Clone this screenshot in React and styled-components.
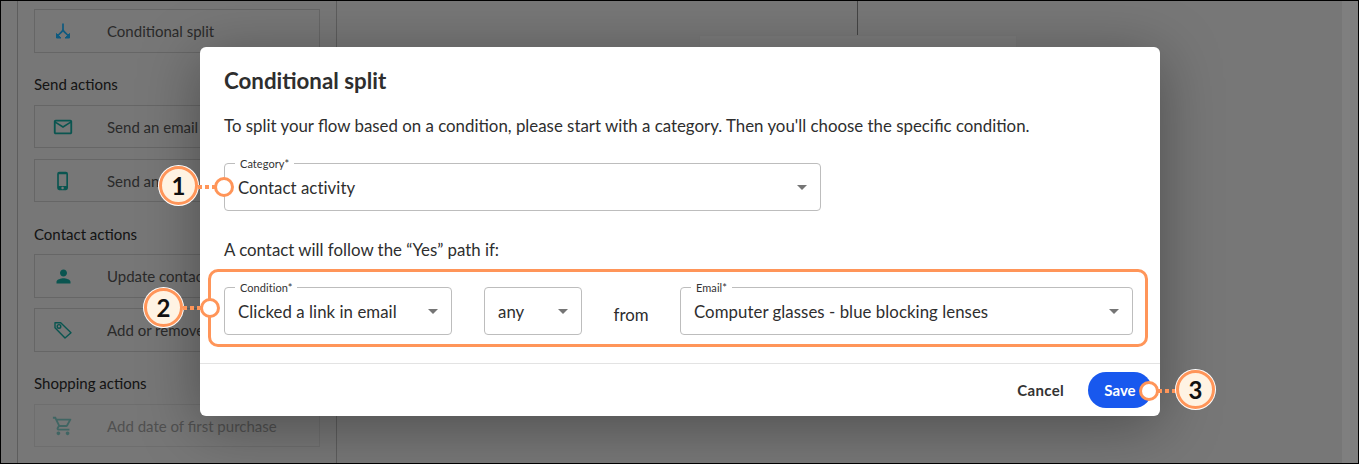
import React from "react";
import styled, { createGlobalStyle } from "styled-components";
import {
  MdOutlineMailOutline,
  MdOutlinePhoneIphone,
  MdPerson,
  MdOutlineShoppingCart,
} from "react-icons/md";

const Global = createGlobalStyle`
  * { box-sizing: border-box; }
  html, body { margin: 0; padding: 0; background: #fff; }
  body { font-family: "Lato", "Noto Sans", sans-serif; color: #2c2c2c; }
`;

const Frame = styled.div`
  position: relative;
  width: 1359px;
  height: 464px;
  overflow: hidden;
  display: flex;
  background: #eee;
  border: 1px solid #000;
`;

const Gutter = styled.div`
  width: 16px;
  flex: none;
`;

const Sidebar = styled.aside`
  width: 320px;
  flex: none;
  padding: 8.3px 16px 0;
  border-left: 1px solid #bbb;
  border-right: 1px solid #bbb;
`;

const ActionGroup = styled.section`
  display: flex;
  flex-direction: column;
  gap: 10.5px;
  margin-bottom: 21.5px;
`;

const GroupTitle = styled.h3`
  margin: 0;
  font-size: 15px;
  font-weight: 400;
  line-height: 20px;
  color: #2a2a2a;
`;

const ActionRow = styled.div`
  height: 43.5px;
  display: flex;
  align-items: center;
  border: 1px solid #ccc;
  font-size: 15px;
  color: #555;
  opacity: ${(p) => (p.$disabled ? 0.5 : 1)};
`;

const ActionIcon = styled.span`
  width: 56px;
  margin-right: 16px;
  flex: none;
  display: flex;
  justify-content: center;
  color: ${(p) => p.$color || "#14aaa0"};
  font-size: ${(p) => p.$size || 22}px;
  svg { display: block; }
`;

const Canvas = styled.main`
  flex: 1;
  display: flex;
  flex-direction: column;
  align-items: center;
  padding-left: 36px;
`;

const Connector = styled.div`
  width: 1px;
  height: 34px;
  background: #888;
`;

const CanvasNode = styled.div`
  width: 318px;
  height: 200px;
  border: 1px solid #ececec;
  background: #f6f6f6;
`;

const RightEdge = styled.div`
  width: 16px;
  flex: none;
  background: #fff;
`;

const Overlay = styled.div`
  position: absolute;
  inset: 0;
  background: rgba(0, 0, 0, 0.5);
  display: flex;
  justify-content: center;
  align-items: flex-start;
  padding: 46px 0 0 1px;
`;

const Modal = styled.div`
  position: relative;
  width: 960px;
  height: 369px;
  background: #fff;
  border-radius: 6px;
  box-shadow: 0 10px 60px rgba(0, 0, 0, 0.35);
  display: flex;
  flex-direction: column;
`;

const ModalBody = styled.div`
  flex: 1;
  padding: 21px 24px 0;
`;

const ModalTitle = styled.h2`
  margin: 0 0 20px;
  font-size: 22.3px;
  line-height: 26px;
  font-weight: 700;
  color: #2e2e2e;
`;

const Para = styled.p`
  margin: 0;
  font-size: 16.85px;
  line-height: 24px;
  color: #2e2e2e;
`;

const CategoryWrap = styled.div`
  margin: 25px 0 27px;
`;

const Field = styled.div`
  position: relative;
  width: ${(p) => p.$w}px;
  height: 48px;
  flex: none;
  border: 1px solid #bdbdbd;
  border-radius: 4px;
  display: flex;
  align-items: center;
  justify-content: space-between;
  padding: 0 13px;
  font-size: 16.8px;
  letter-spacing: 0.06px;
  color: #2e2e2e;
`;

const FieldLabel = styled.span`
  position: absolute;
  top: -7px;
  left: 10px;
  padding: 0 5px;
  background: #fff;
  font-size: 11px;
  line-height: 13px;
  color: #333;
`;

const Caret = styled.span`
  width: 0;
  height: 0;
  border-left: 5px solid transparent;
  border-right: 5px solid transparent;
  border-top: 5px solid #757575;
`;

const HighlightRow = styled.div`
  margin: 7px -12px 0 -16px;
  height: 78px;
  border: 3px solid #ff9559;
  border-radius: 10px;
  display: flex;
  align-items: flex-start;
  padding: 15px 13px 0;
`;

const FromLabel = styled.span`
  width: 98px;
  flex: none;
  text-align: center;
  font-size: 16.8px;
  line-height: 48px;
  padding-top: 4px;
`;

const Gap = styled.span`
  width: 32px;
  flex: none;
`;

const ModalFooter = styled.footer`
  height: 53px;
  border-top: 1px solid #e3e3e3;
  display: flex;
  align-items: center;
  justify-content: flex-end;
  gap: 24px;
  padding: 0 8px 0 0;
`;

const CancelButton = styled.button`
  border: 0;
  background: none;
  padding: 0;
  font: 700 15px "Lato", sans-serif;
  letter-spacing: 0.3px;
  color: #333;
`;

const SaveButton = styled.button`
  width: 64px;
  height: 36px;
  border: 0;
  border-radius: 18px;
  background: #1858ee;
  color: #fff;
  font: 700 15px "Lato", sans-serif;
`;

const Callout = styled.div`
  position: absolute;
  left: ${(p) => p.$x}px;
  top: ${(p) => p.$y}px;
  width: 39px;
  height: 39px;
  border-radius: 50%;
  border: 3px solid #ff9559;
  background: #fff3e3;
  box-shadow: 0 0 0 1px #fff;
  display: flex;
  align-items: center;
  justify-content: center;
  font-size: 24px;
  font-weight: 700;
  color: #111;
`;

const Dots = styled.div`
  position: absolute;
  left: ${(p) => p.$x}px;
  top: ${(p) => p.$y}px;
  width: ${(p) => p.$w}px;
  height: 4px;
  background: repeating-linear-gradient(90deg, #ff9559 0 4px, transparent 4px 7px);
`;

const Ring = styled.div`
  position: absolute;
  left: ${(p) => p.$x}px;
  top: ${(p) => p.$y}px;
  width: 20px;
  height: 20px;
  border-radius: 50%;
  border: 3px solid #ff9559;
  background: #fff;
`;

const SplitIcon = () => (
  <svg width="16" height="16" viewBox="0 0 16 16" fill="none" stroke="currentColor" strokeWidth="1.7">
    <path d="M8 0.5v6c0 1.5-1.5 2.5-5 6M8 6.5c0 1.5 1.5 2.5 5 6" />
    <path d="M1.5 10.5v4.5h4.5l-4.5-4.5zM14.5 10.5v4.5h-4.5l4.5-4.5z" fill="currentColor" strokeWidth="1" />
  </svg>
);

const TagIcon = () => (
  <svg width="18" height="18" viewBox="0 0 18 18" fill="none" stroke="currentColor" strokeWidth="1.4" strokeLinejoin="round">
    <path d="M1 1.7h5.7L17 11.7 11 17 1 6.7z" />
    <circle cx="5" cy="5.4" r="1.8" />
  </svg>
);

const groups = [
  { items: [{ icon: <SplitIcon />, color: "#1cb4ff", label: "Conditional split" }] },
  {
    title: "Send actions",
    items: [
      { icon: <MdOutlineMailOutline />, label: "Send an email" },
      { icon: <MdOutlinePhoneIphone />, size: 20, label: "Send an SMS" },
    ],
  },
  {
    title: "Contact actions",
    items: [
      { icon: <MdPerson />, size: 21, label: "Update contact" },
      { icon: <TagIcon />, label: "Add or remove tag" },
    ],
  },
  {
    title: "Shopping actions",
    items: [{ icon: <MdOutlineShoppingCart />, label: "Add date of first purchase", disabled: true }],
  },
];

export default function App() {
  return (
    <>
      <Global />
      <Frame>
        <Gutter />
        <Sidebar>
          {groups.map((g, i) => (
            <ActionGroup key={i}>
              {g.title && <GroupTitle>{g.title}</GroupTitle>}
              {g.items.map((it) => (
                <ActionRow key={it.label} $disabled={it.disabled}>
                  <ActionIcon $color={it.color} $size={it.size}>{it.icon}</ActionIcon>
                  {it.label}
                </ActionRow>
              ))}
            </ActionGroup>
          ))}
        </Sidebar>
        <Canvas>
          <Connector />
          <CanvasNode />
        </Canvas>
        <RightEdge />
        <Overlay>
          <Modal>
            <ModalBody>
              <ModalTitle>Conditional split</ModalTitle>
              <Para>To split your flow based on a condition, please start with a category. Then you'll choose the specific condition.</Para>
              <CategoryWrap>
                <Field $w={597}>
                  <FieldLabel>Category*</FieldLabel>
                  Contact activity
                  <Caret />
                </Field>
              </CategoryWrap>
              <Para>A contact will follow the “Yes” path if:</Para>
              <HighlightRow>
                <Field $w={228}>
                  <FieldLabel>Condition*</FieldLabel>
                  Clicked a link in email
                  <Caret />
                </Field>
                <Gap />
                <Field $w={98}>
                  any
                  <Caret />
                </Field>
                <FromLabel>from</FromLabel>
                <Field $w={453}>
                  <FieldLabel>Email*</FieldLabel>
                  Computer glasses - blue blocking lenses
                  <Caret />
                </Field>
              </HighlightRow>
            </ModalBody>
            <ModalFooter>
              <CancelButton>Cancel</CancelButton>
              <SaveButton>Save</SaveButton>
            </ModalFooter>
          </Modal>
        </Overlay>
        <Callout $x={158} $y={165}>1</Callout>
        <Dots $x={197} $y={184} $w={17} />
        <Ring $x={213} $y={176} />
        <Callout $x={143} $y={287}>2</Callout>
        <Dots $x={182} $y={305} $w={18} />
        <Ring $x={199} $y={297} />
        <Ring $x={1138} $y={380} />
        <Dots $x={1157} $y={388} $w={18} />
        <Callout $x={1175} $y={369}>3</Callout>
      </Frame>
    </>
  );
}
